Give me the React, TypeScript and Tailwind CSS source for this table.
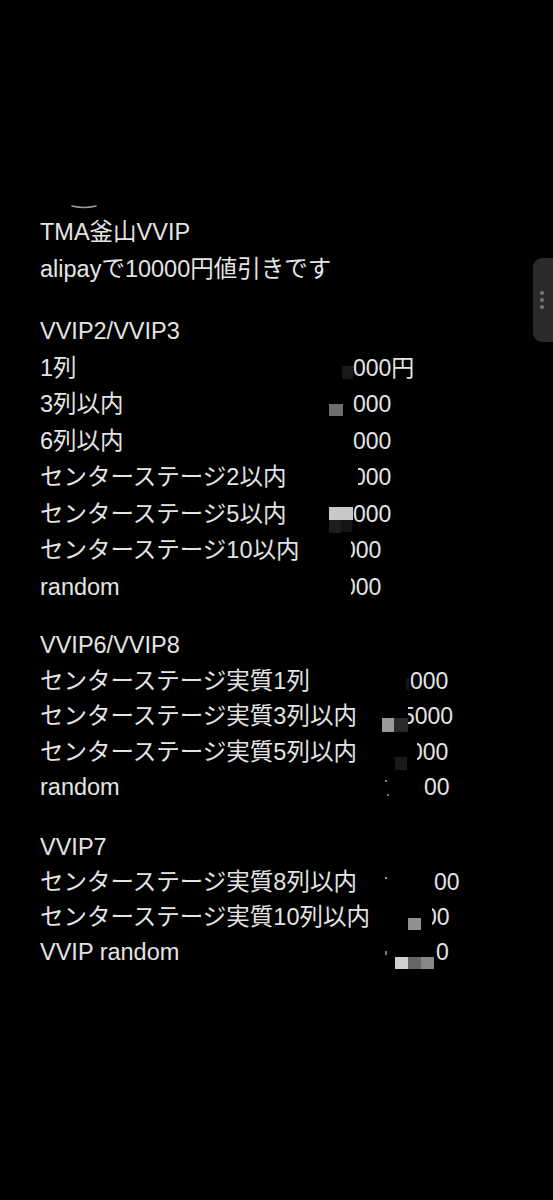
import React from 'react';

type Block = { cls: string };
type Row = { label: string; labelW: string; value: string; blocks?: Block[] };
type Group = { title: string; lead: string; mt: string; rows: Row[] };

const groups: Group[] = [
  {
    title: 'VVIP2/VVIP3',
    lead: 'leading-[36.5px]',
    mt: 'mt-[25px]',
    rows: [
      { label: '1列', labelW: 'w-[313px]', value: '000円', blocks: [{ cls: 'left-[-11px] top-[16px] w-[11px] h-[13px] bg-[#1a1a1a]' }] },
      { label: '3列以内', labelW: 'w-[313px]', value: '000', blocks: [{ cls: 'left-[-24px] top-[18px] w-[14px] h-[12px] bg-[#6e6e6e]' }] },
      { label: '6列以内', labelW: 'w-[313px]', value: '000' },
      { label: 'センターステージ2以内', labelW: 'w-[313px]', value: '000', blocks: [{ cls: 'left-[-2px] top-0 w-[7px] h-full bg-black' }] },
      {
        label: 'センターステージ5以内',
        labelW: 'w-[313px]',
        value: '000',
        blocks: [
          { cls: 'left-[-24px] top-[11px] w-[24px] h-[13px] bg-[#c8c8c8]' },
          { cls: 'left-[-24px] top-[24px] w-[12px] h-[13px] bg-[#1e1e1e]' },
          { cls: 'left-[-12px] top-[24px] w-[11px] h-[13px] bg-[#141414]' },
        ],
      },
      { label: 'センターステージ10以内', labelW: 'w-[303px]', value: '000', blocks: [{ cls: 'left-[-2px] top-0 w-[10px] h-full bg-black' }] },
      { label: 'random', labelW: 'w-[303px]', value: '000', blocks: [{ cls: 'left-[-2px] top-0 w-[10px] h-full bg-black' }] },
    ],
  },
  {
    title: 'VVIP6/VVIP8',
    lead: 'leading-[35.5px]',
    mt: 'mt-[23px]',
    rows: [
      { label: 'センターステージ実質1列', labelW: 'w-[370px]', value: '000', blocks: [{ cls: 'left-[-4px] top-[14px] w-[3px] h-[12px] bg-[#151515]' }] },
      {
        label: 'センターステージ実質3列以内',
        labelW: 'w-[362px]',
        value: '5000',
        blocks: [
          { cls: 'left-[-2px] top-0 w-[8px] h-full bg-black' },
          { cls: 'left-[-20px] top-[19px] w-[12px] h-[14px] bg-[#9a9a9a]' },
          { cls: 'left-[-8px] top-[19px] w-[14px] h-[14px] bg-[#2a2a2a]' },
        ],
      },
      {
        label: 'センターステージ実質5列以内',
        labelW: 'w-[370px]',
        value: '000',
        blocks: [
          { cls: 'left-[-2px] top-0 w-[9px] h-full bg-black' },
          { cls: 'left-[-15px] top-[22px] w-[12px] h-[13px] bg-[#1a1a1a]' },
        ],
      },
      {
        label: 'random',
        labelW: 'w-[384px]',
        value: '00',
        blocks: [
          { cls: 'left-[-39px] top-[10px] w-[2px] h-[2px] bg-[#888]' },
          { cls: 'left-[-37px] top-[24px] w-[2px] h-[2px] bg-[#777]' },
        ],
      },
    ],
  },
  {
    title: 'VVIP7',
    lead: 'leading-[35px]',
    mt: 'mt-[24px]',
    rows: [
      { label: 'センターステージ実質8列以内', labelW: 'w-[394px]', value: '00', blocks: [{ cls: 'left-[-49px] top-[12px] w-[2px] h-[2px] bg-[#999]' }] },
      {
        label: 'センターステージ実質10列以内',
        labelW: 'w-[384px]',
        value: '00',
        blocks: [
          { cls: 'left-[-2px] top-0 w-[10px] h-full bg-black' },
          { cls: 'left-[-16px] top-[18px] w-[13px] h-[12px] bg-[#909090]' },
        ],
      },
      {
        label: 'VVIP random',
        labelW: 'w-[396px]',
        value: '0',
        blocks: [
          { cls: 'left-[-41px] top-[22px] w-[13px] h-[12px] bg-[#d0d0d0]' },
          { cls: 'left-[-28px] top-[22px] w-[13px] h-[12px] bg-[#666]' },
          { cls: 'left-[-15px] top-[22px] w-[13px] h-[12px] bg-[#888]' },
          { cls: 'left-[-51px] top-[16px] w-[2px] h-[4px] bg-[#777]' },
        ],
      },
    ],
  },
];

export default function App() {
  return (
    <div className="relative min-h-[1200px] w-full overflow-hidden bg-black text-[23px] text-[#e4e4e4] [font-family:'Liberation_Sans','Noto_Sans_CJK_JP',sans-serif]">
      {/* side handle */}
      <div className="absolute right-0 top-[258px] flex h-[84px] w-[20px] flex-col items-center justify-center gap-[3px] rounded-l-[9px] bg-[#2a2a2a] pr-[2px]">
        <span className="h-[4px] w-[4px] rounded-full bg-[#777]" />
        <span className="h-[4px] w-[4px] rounded-full bg-[#777]" />
        <span className="h-[4px] w-[4px] rounded-full bg-[#777]" />
      </div>

      <div className="pl-[40px] pt-[203px]">
        <svg width="26" height="8" viewBox="0 0 26 8" className="ml-[31px] block">
          <path d="M1 3 Q13 6 25 3" stroke="#9a9a9a" strokeWidth="1.6" fill="none" strokeLinecap="round" />
        </svg>
        <div className="mt-[3px] leading-[37px] text-[23.5px]">
          <div>TMA釜山VVIP</div>
          <div>alipayで10000円値引きです</div>
        </div>

        {groups.map((g) => (
          <div key={g.title} className={`${g.mt} ${g.lead}`}>
            <div className="text-[23.5px]">{g.title}</div>
            {g.rows.map((r, i) => (
              <div key={i} className="flex">
                <span className={`${r.labelW} shrink-0 whitespace-nowrap text-[23.5px]`}>{r.label}</span>
                <span className="relative whitespace-nowrap">
                  {r.value}
                  {r.blocks?.map((b, j) => (
                    <span key={j} className={`absolute ${b.cls}`} />
                  ))}
                </span>
              </div>
            ))}
          </div>
        ))}
      </div>
    </div>
  );
}
